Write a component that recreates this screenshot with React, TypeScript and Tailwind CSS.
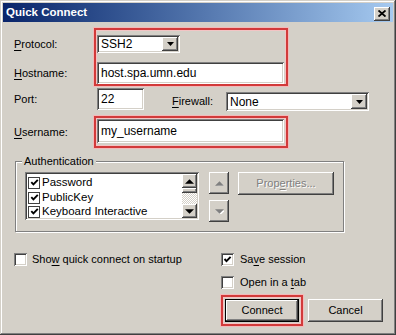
import React from "react";

const sunken =
  "shadow-[inset_1px_1px_0_#808080,inset_-1px_-1px_0_#ffffff,inset_2px_2px_0_#404040,inset_-2px_-2px_0_#d4d0c8]";
const raised =
  "shadow-[inset_-1px_-1px_0_#404040,inset_1px_1px_0_#ffffff,inset_-2px_-2px_0_#808080,inset_2px_2px_0_#d4d0c8]";
const redBox = "border-2 border-[#d23a3a] shadow-[0_0_0_1px_#f3b9b9,inset_0_0_0_1px_#f3c4c4]";

function U({ children }: { children: React.ReactNode }) {
  return <span className="underline underline-offset-[2px]">{children}</span>;
}

function Arrow({ dir, disabled }: { dir: "up" | "down"; disabled?: boolean }) {
  const pts = dir === "up" ? "0,4 4,0 8,4" : "0,0 8,0 4,4";
  return (
    <svg width="9" height="5" viewBox="0 0 8 4" className="block">
      {disabled && (
        <polygon points={pts} fill="#ffffff" transform="translate(1,1)" />
      )}
      <polygon points={pts} fill={disabled ? "#808080" : "#000000"} />
    </svg>
  );
}

function DropButton() {
  return (
    <div className={`w-[16px] h-full flex items-center justify-center bg-[#d4d0c8] ${raised}`}>
      <svg width="7" height="4" viewBox="0 0 7 4">
        <polygon points="0,0 7,0 3.5,4" fill="#000" />
      </svg>
    </div>
  );
}

function Check({ checked }: { checked?: boolean }) {
  return (
    <div className={`w-[13px] h-[13px] bg-white shrink-0 flex items-center justify-center ${sunken}`}>
      {checked && (
        <svg width="9" height="9" viewBox="0 0 9 9">
          <path d="M1.5 4 L3.5 6.2 L7.6 1.8" stroke="#000" strokeWidth="1.9" fill="none" />
        </svg>
      )}
    </div>
  );
}

function SmallCheck() {
  return (
    <div className="w-[12px] h-[12px] bg-white border border-[#404040] shrink-0 flex items-center justify-center">
      <svg width="9" height="9" viewBox="0 0 9 9">
        <path d="M1.3 4.2 L3.4 6.4 L7.8 1.8" stroke="#000" strokeWidth="1.9" fill="none" />
      </svg>
    </div>
  );
}

export default function App() {
  return (
    <div
      className={`w-[396px] h-[335px] bg-[#d4d0c8] text-[11px] leading-none text-black p-[3px] flex flex-col shadow-[inset_-1px_-1px_0_#404040,inset_1px_1px_0_#d4d0c8,inset_-2px_-2px_0_#808080,inset_2px_2px_0_#ffffff]`}
      style={{ fontFamily: '"Liberation Sans", Arial, sans-serif' }}
    >
      {/* Title bar */}
      <div className="h-[19px] flex items-center justify-between bg-gradient-to-r from-[#0a246a] to-[#a6caf0] pl-[3px] pr-[3px]">
        <span className="text-white font-bold text-[11.5px]">Quick Connect</span>
        <div className={`w-[16px] h-[14px] mt-[2px] bg-[#d4d0c8] flex items-center justify-center ${raised}`}>
          <svg width="8" height="7" viewBox="0 0 8 7">
            <path d="M0.5 0.5 L7.5 6.5 M7.5 0.5 L0.5 6.5" stroke="#000" strokeWidth="1.8" />
          </svg>
        </div>
      </div>

      {/* Body */}
      <div className="flex-1 flex flex-col pl-[11px]">
        {/* Protocol + Hostname */}
        <div className="flex mt-[6px]">
          <div className="w-[80px] flex flex-col">
            <div className="h-[7px]" />
            <div className="h-[18px] flex items-center">
              <span><U>P</U>rotocol:</span>
            </div>
            <div className="h-[9px]" />
            <div className="h-[22px] flex items-center">
              <span><U>H</U>ostname:</span>
            </div>
          </div>
          <div className={`w-[194px] h-[58px] ${redBox} pt-[5px] pl-[1px] pr-[2px] flex flex-col`}>
            <div className={`w-[83px] h-[18px] bg-white flex items-stretch p-[2px] ${sunken}`}>
              <div className="flex-1 flex items-center pl-[2px] text-[12px]">SSH2</div>
              <DropButton />
            </div>
            <div className={`mt-[9px] h-[22px] bg-white flex items-center pl-[4px] text-[12px] ${sunken}`}>
              host.spa.umn.edu
            </div>
          </div>
        </div>

        {/* Port + Firewall */}
        <div className="flex items-start mt-[2px]">
          <div className="w-[83px] h-[22px] flex items-center">Port:</div>
          <div className={`w-[47px] h-[22px] bg-white flex items-center pl-[4px] text-[12px] ${sunken}`}>22</div>
          <div className="w-[28px]" />
          <div className="w-[54px] h-[22px] mt-[2px] flex items-center">
            <span><U>F</U>irewall:</span>
          </div>
          <div className={`mt-[4px] w-[143px] h-[19px] bg-white flex items-stretch p-[2px] ${sunken}`}>
            <div className="flex-1 flex items-center pl-[2px] text-[12px]">None</div>
            <DropButton />
          </div>
        </div>

        {/* Username */}
        <div className="flex mt-[4px]">
          <div className="w-[80px] h-[32px] flex items-center">
            <span><U>U</U>sername:</span>
          </div>
          <div className={`w-[194px] h-[32px] ${redBox} pl-[1px] pr-[2px] pt-[1px]`}>
            <div className={`h-[24px] bg-white flex items-center pl-[4px] text-[12px] ${sunken}`}>my_username</div>
          </div>
        </div>

        {/* Authentication group */}
        <div className="relative ml-[1px] mt-[13px] w-[329px] h-[71px] border border-[#808080] shadow-[1px_1px_0_#ffffff,inset_1px_1px_0_#ffffff] flex items-start pl-[9px] pt-[10px]">
          <span className="absolute left-[6px] -top-[6px] bg-[#d4d0c8] px-[2px]">Authentication</span>
          <div className={`w-[174px] h-[48px] bg-white flex p-[2px] ${sunken}`}>
            <div className="flex-1 flex flex-col pt-[1px] pl-[1px] text-[11.5px]">
              <div className="h-[16px] flex items-center gap-[2px]"><SmallCheck /><span>Password</span></div>
              <div className="h-[16px] flex items-center gap-[2px]"><SmallCheck /><span>PublicKey</span></div>
              <div className="h-[13px] flex items-center gap-[2px] overflow-hidden"><SmallCheck /><span>Keyboard Interactive</span></div>
            </div>
            <div className="w-[15px] flex flex-col">
              <div className={`h-[14px] bg-[#d4d0c8] flex items-center justify-center ${raised}`}><Arrow dir="up" /></div>
              <div className={`h-[5px] bg-[#d4d0c8] ${raised}`} />
              <div className="flex-1 bg-[repeating-conic-gradient(#ffffff_0_25%,#d4d0c8_0_50%)] bg-[length:2px_2px]" />
              <div className={`h-[14px] bg-[#d4d0c8] flex items-center justify-center ${raised}`}><Arrow dir="down" /></div>
            </div>
          </div>
          <div className="ml-[10px] flex flex-col">
            <div className={`w-[20px] h-[22px] flex items-center justify-center ${raised}`}><Arrow dir="up" disabled /></div>
            <div className={`mt-[6px] w-[20px] h-[22px] flex items-center justify-center ${raised}`}><Arrow dir="down" disabled /></div>
          </div>
          <div className={`ml-[9px] w-[96px] h-[23px] flex items-center justify-center text-[#808080] [text-shadow:1px_1px_0_#ffffff] ${raised}`}>
            Prop<U>e</U>rties...
          </div>
        </div>

        {/* Bottom */}
        <div className="flex mt-[21px]">
          <div className="w-[207px] flex items-start">
            <div className="flex items-center gap-[5px]">
              <Check />
              <span>Sho<U>w</U> quick connect on startup</span>
            </div>
          </div>
          <div className="flex flex-col">
            <div className="flex items-center gap-[6px] h-[13px]">
              <Check checked />
              <span>Sa<U>v</U>e session</span>
            </div>
            <div className="flex items-center gap-[6px] h-[13px] mt-[10px]">
              <Check />
              <span>Open in a <U>t</U>ab</span>
            </div>
            <div className="flex items-center mt-[6px]">
              <div className={`w-[82px] h-[31px] ${redBox} flex items-center justify-center`}>
                <div className="w-[74px] h-[23px] border border-black">
                  <div className={`w-full h-full flex items-center justify-center ${raised}`}>Connect</div>
                </div>
              </div>
              <div className={`ml-[5px] w-[75px] h-[23px] flex items-center justify-center ${raised}`}>Cancel</div>
            </div>
          </div>
        </div>
      </div>
    </div>
  );
}
